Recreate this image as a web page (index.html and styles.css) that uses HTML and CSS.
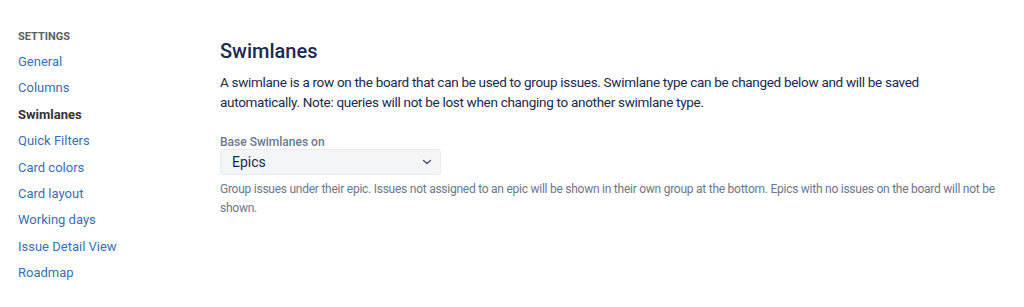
FILE: index.html
```html
<!DOCTYPE html>
<html lang="en">
<head>
    <meta charset="UTF-8">
    <title>Board settings - Swimlanes</title>
    <link rel="stylesheet" href="styles.css">
</head>
<body>

    <div class="page">
        <!-- Settings nav -->
        <div class="sidebar">
            <div class="sidebar-title">SETTINGS</div>
            <nav>
                <a href="#">General</a>
                <a href="#">Columns</a>
                <a href="#" class="active">Swimlanes</a>
                <a href="#">Quick Filters</a>
                <a href="#">Card colors</a>
                <a href="#">Card layout</a>
                <a href="#">Working days</a>
                <a href="#">Issue Detail View</a>
                <a href="#">Roadmap</a>
            </nav>
        </div>

        <!-- Main content -->
        <div class="main-content">
            <h1>Swimlanes</h1>
            <p class="intro">A swimlane is a row on the board that can be used to group issues. Swimlane type can be changed below and will be saved automatically. Note: queries will not be lost when changing to another swimlane type.</p>

            <div class="field">
                <label class="field-label" for="swimlaneType">Base Swimlanes on</label>
                <div class="select">
                    <span>Epics</span>
                    <svg width="10" height="6" viewBox="0 0 10 6"><path d="M1.5 1.5 L5 4.5 L8.5 1.5" fill="none" stroke="#42526e" stroke-width="1.4" stroke-linecap="round" stroke-linejoin="round"/></svg>
                </div>
                <div class="field-help">Group issues under their epic. Issues not assigned to an epic will be shown in their own group at the bottom. Epics with no issues on the board will not be shown.</div>
            </div>
        </div>
    </div>

</body>
</html>
```

FILE: styles.css
```css
* {
    margin: 0;
    padding: 0;
    box-sizing: border-box;
    font-family: Roboto, "Noto Sans", sans-serif;
}

:root {
    --link-color: #3572b0;
    --text-primary: #172b4d;
    --text-subtle: #6b778c;
}

body {
    background-color: #ffffff;
    color: var(--text-primary);
}

.page {
    display: flex;
    padding-top: 30px;
}

/* Sidebar */
.sidebar {
    width: 220px;
    padding-left: 18px;
    flex-shrink: 0;
}

.sidebar-title {
    font-size: 11px;
    font-weight: bold;
    color: #5e5e5e;
    line-height: 14px;
    margin-bottom: 5px;
}

.sidebar nav a {
    display: block;
    font-size: 13px;
    line-height: 26.4px;
    color: var(--link-color);
    text-decoration: none;
}

.sidebar nav a.active {
    color: #333333;
    font-weight: bold;
}

/* Main */
.main-content {
    width: 775px;
}

h1 {
    font-size: 20px;
    font-weight: 500;
    line-height: 24px;
    margin-top: 9px;
    color: var(--text-primary);
}

.intro {
    font-size: 13.5px;
    line-height: 19.5px;
    letter-spacing: -0.3px;
    margin-top: 10px;
    max-width: 702px;
}

.field {
    margin-top: 23px;
}

.field-label {
    display: block;
    font-size: 12px;
    font-weight: 500;
    color: var(--text-subtle);
    line-height: 14px;
}

.select {
    width: 221px;
    height: 26px;
    padding: 0 8px 0 11px;
    display: flex;
    justify-content: space-between;
    align-items: center;
    background-color: #f4f5f7;
    border: 1px solid #ebecf0;
    border-radius: 3px;
    font-size: 14px;
}

.field-help {
    font-size: 12px;
    line-height: 19px;
    letter-spacing: -0.25px;
    color: var(--text-subtle);
    margin-top: 5px;
}
```
